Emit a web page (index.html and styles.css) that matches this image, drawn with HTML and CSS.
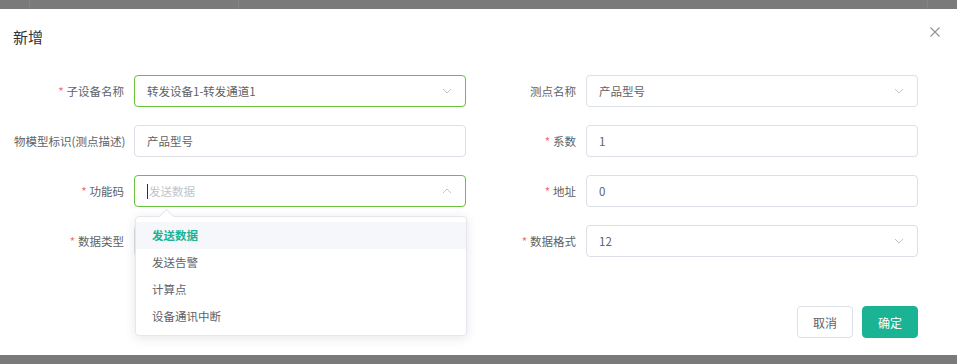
FILE: index.html
```html
<!DOCTYPE html>
<html lang="zh">

<head>
  <meta charset="UTF-8">
  <meta name="viewport" content="width=device-width, initial-scale=1">
  <title>新增</title>
  <link rel="stylesheet" href="styles.css">
</head>

<body>

  <div class="mask-band top">
    <span class="col-line" style="width: 29px"></span>
    <span class="col-line" style="width: 208px"></span>
    <span class="col-line" style="width: 688px"></span>
  </div>

  <div class="dialog">
    <div class="dialog-header">
      <span class="dialog-title">新增</span>
      <button class="dialog-close" aria-label="关闭">
        <svg width="10" height="10" viewBox="0 0 10 10">
          <path d="M0.5 0.5 L9.5 9.5 M9.5 0.5 L0.5 9.5" stroke="#909399" stroke-width="1.1" fill="none" />
        </svg>
      </button>
    </div>

    <div class="dialog-body">
      <div class="form-grid">
        <div class="form-item">
          <label class="form-label"><span class="req">*</span>子设备名称</label>
          <div class="field select is-success">
            <span class="value">转发设备1-转发通道1</span>
            <svg class="arrow" width="10" height="6" viewBox="0 0 10 6"><path d="M1 1 L5 5 L9 1" stroke="#c0c4cc" fill="none" /></svg>
          </div>
        </div>
        <div class="form-item">
          <label class="form-label">测点名称</label>
          <div class="field select">
            <span class="value">产品型号</span>
            <svg class="arrow" width="10" height="6" viewBox="0 0 10 6"><path d="M1 1 L5 5 L9 1" stroke="#c0c4cc" fill="none" /></svg>
          </div>
        </div>

        <div class="form-item">
          <label class="form-label">物模型标识(测点描述)</label>
          <div class="field">
            <span class="value">产品型号</span>
          </div>
        </div>
        <div class="form-item">
          <label class="form-label"><span class="req">*</span>系数</label>
          <div class="field">
            <span class="value">1</span>
          </div>
        </div>

        <div class="form-item">
          <label class="form-label"><span class="req">*</span>功能码</label>
          <div class="field select is-success is-open">
            <span class="caret"></span>
            <span class="placeholder">发送数据</span>
            <svg class="arrow" width="10" height="6" viewBox="0 0 10 6"><path d="M1 5 L5 1 L9 5" stroke="#c0c4cc" fill="none" /></svg>
            <ul class="dropdown">
              <li class="selected">发送数据</li>
              <li>发送告警</li>
              <li>计算点</li>
              <li>设备通讯中断</li>
            </ul>
          </div>
        </div>
        <div class="form-item">
          <label class="form-label"><span class="req">*</span>地址</label>
          <div class="field">
            <span class="value">0</span>
          </div>
        </div>

        <div class="form-item">
          <label class="form-label"><span class="req">*</span>数据类型</label>
          <div class="field select">
            <span class="value"></span>
          </div>
        </div>
        <div class="form-item">
          <label class="form-label"><span class="req">*</span>数据格式</label>
          <div class="field select">
            <span class="value">12</span>
            <svg class="arrow" width="10" height="6" viewBox="0 0 10 6"><path d="M1 1 L5 5 L9 1" stroke="#c0c4cc" fill="none" /></svg>
          </div>
        </div>
      </div>
    </div>

    <div class="dialog-footer">
      <button class="btn">取消</button>
      <button class="btn btn-primary">确定</button>
    </div>
  </div>

  <div class="mask-band bottom"></div>

</body>

</html>
```

FILE: styles.css
```css
body {
  font-family: "Noto Sans CJK SC", "Noto Sans", sans-serif;
  background-color: #7a7a7a;
  margin: 0;
  width: 957px;
  height: 364px;
  overflow: hidden;
  color: #606266;
}

.mask-band {
  background-color: #7a7a7a;
}

.mask-band.top {
  display: flex;
  height: 9px;
}

.col-line {
  height: 9px;
  border-right: 1px solid #848484;
}

.mask-band.bottom {
  height: 9px;
}

.dialog {
  position: relative;
  background: white;
  height: 346px;
  box-sizing: border-box;
}

.dialog-header {
  padding: 15px 13px 10px;
  height: 20px;
}

.dialog-title {
  font-size: 15px;
  line-height: 20px;
  color: #303133;
}

.dialog-close {
  position: absolute;
  top: 18px;
  right: 17px;
  padding: 0;
  border: none;
  background: none;
  line-height: 0;
  cursor: pointer;
}

.dialog-body {
  padding: 21px 0 0 14px;
}

.form-grid {
  display: grid;
  grid-template-columns: 452px 452px;
  row-gap: 18px;
}

.form-item {
  display: flex;
  align-items: center;
  height: 32px;
}

.form-label {
  width: 120px;
  box-sizing: border-box;
  padding-right: 10px;
  text-align: right;
  font-size: 11.5px;
  color: #606266;
  white-space: nowrap;
}

.req {
  color: #f56c6c;
  margin-right: 3px;
}

.field {
  position: relative;
  display: flex;
  align-items: center;
  width: 332px;
  height: 32px;
  box-sizing: border-box;
  padding: 0 12px;
  border: 1px solid #dcdfe6;
  border-radius: 4px;
  font-size: 11.5px;
  background: white;
}

.field.is-success {
  border-color: #67c23a;
}

.value {
  flex: 1;
  color: #606266;
}

.placeholder {
  flex: 1;
  color: #c0c4cc;
}

.caret {
  width: 1px;
  height: 15px;
  margin-right: 1px;
  background: #303133;
}

.arrow {
  margin-right: 1px;
}

.dropdown {
  position: absolute;
  top: 40px;
  left: 0;
  width: 330px;
  margin: 0;
  padding: 5px 0;
  list-style: none;
  background: white;
  border: 1px solid #e4e7ed;
  border-radius: 4px;
  box-shadow: 0 2px 12px rgba(0, 0, 0, 0.1);
  z-index: 10;
}

.dropdown::before {
  content: "";
  position: absolute;
  top: -6px;
  left: 25px;
  width: 10px;
  height: 10px;
  background: white;
  border-left: 1px solid #e4e7ed;
  border-top: 1px solid #e4e7ed;
  transform: rotate(45deg);
}

.dropdown li {
  position: relative;
  height: 27px;
  line-height: 27px;
  padding: 0 16px;
  color: #606266;
}

.dropdown li.selected {
  background-color: #f5f7fa;
  color: #1ab394;
  font-weight: bold;
}

.dialog-footer {
  display: flex;
  justify-content: flex-end;
  gap: 9px;
  padding: 49px 39px 0 0;
}

.btn {
  width: 56px;
  height: 32px;
  padding: 0;
  border: 1px solid #dcdfe6;
  border-radius: 4px;
  background: white;
  color: #606266;
  font-family: inherit;
  font-size: 12px;
  cursor: pointer;
}

.btn-primary {
  background-color: #1ab394;
  border-color: #1ab394;
  color: white;
}
```
